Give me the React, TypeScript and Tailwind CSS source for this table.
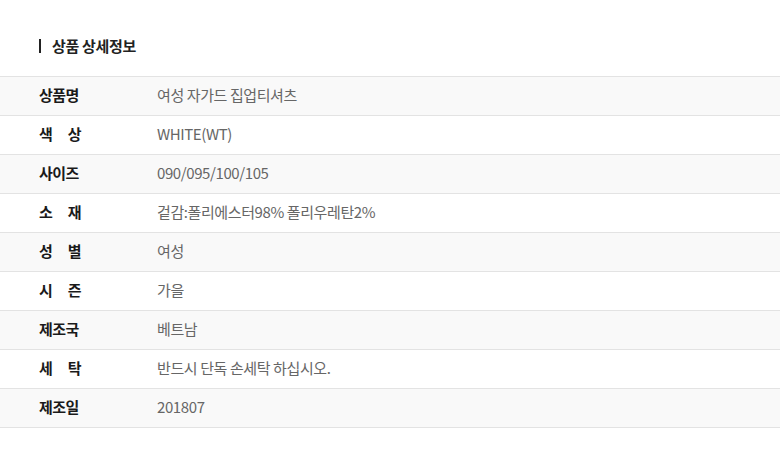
const rows: { label: string[]; value: string }[] = [
  { label: ["상품명"], value: "여성 자가드 집업티셔츠" },
  { label: ["색", "상"], value: "WHITE(WT)" },
  { label: ["사이즈"], value: "090/095/100/105" },
  { label: ["소", "재"], value: "겉감:폴리에스터98% 폴리우레탄2%" },
  { label: ["성", "별"], value: "여성" },
  { label: ["시", "즌"], value: "가을" },
  { label: ["제조국"], value: "베트남" },
  { label: ["세", "탁"], value: "반드시 단독 손세탁 하십시오." },
  { label: ["제조일"], value: "201807" },
];

export default function App() {
  return (
    <div className="w-[780px] h-[466px] bg-white font-['Noto_Sans_CJK_KR','Noto_Sans',sans-serif]">
      {/* Title */}
      <div className="h-[76px] flex items-center pl-[39px] pt-[16px]">
        <span className="w-[2px] h-[14px] bg-[#222] mr-[11px]" />
        <h2 className="text-[15px] font-bold text-[#222] tracking-[-0.3px]">상품 상세정보</h2>
      </div>

      {/* Table */}
      <div className="border-t border-[#e3e3e3]">
        {rows.map((row, idx) => (
          <div
            key={idx}
            className={`h-[39px] flex items-center pb-[2px] border-b border-[#e3e3e3] ${
              idx % 2 === 0 ? "bg-[#f9f9f9]" : "bg-white"
            }`}
          >
            <div className="w-[157px] pl-[39px] shrink-0">
              <div
                className={`w-[42px] flex text-[15px] font-bold text-[#1a1a1a] tracking-[-0.5px] ${
                  row.label.length > 1 ? "justify-between" : ""
                }`}
              >
                {row.label.map((l) => (
                  <span key={l}>{l}</span>
                ))}
              </div>
            </div>
            <div className="text-[15px] text-[#666] tracking-[-0.4px]">{row.value}</div>
          </div>
        ))}
      </div>
    </div>
  );
}
